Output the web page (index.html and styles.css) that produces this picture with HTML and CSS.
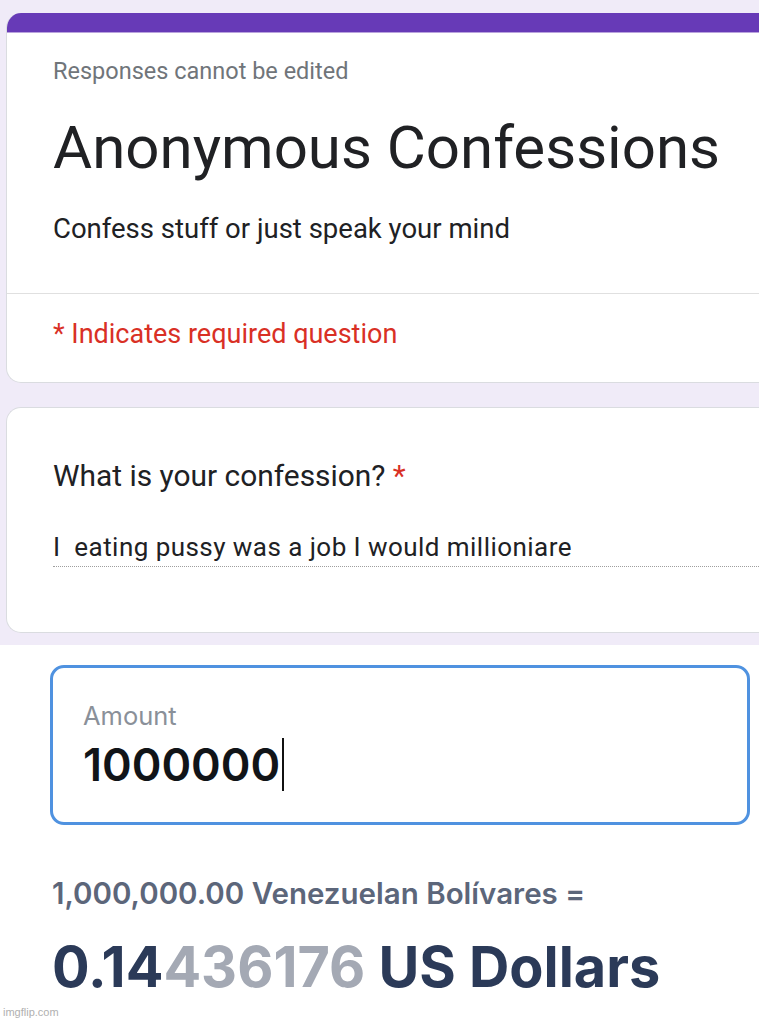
FILE: index.html
```html
<!DOCTYPE html>
<html lang="en">
<head>
  <meta charset="UTF-8">
  <title>Anonymous Confessions</title>
  <link rel="stylesheet" href="styles.css">
</head>
<body>

  <!-- 1) GOOGLE FORM PART -->
  <div class="form-area">
    <div class="card header-card">
      <div class="card-accent"></div>
      <div class="header-main">
        <div class="notice">Responses cannot be edited</div>
        <h1 class="form-title">Anonymous Confessions</h1>
        <div class="form-desc">Confess stuff or just speak your mind</div>
      </div>
      <div class="header-required">* Indicates required question</div>
    </div>

    <div class="card question-card">
      <div class="question">What is your confession? <span class="star">*</span></div>
      <div class="answer">I&nbsp; eating pussy was a job I would millioniare</div>
    </div>
  </div>

  <!-- 2) CURRENCY CONVERTER PART -->
  <div class="converter">
    <div class="amount-box">
      <div class="amount-label">Amount</div>
      <div class="amount-value">1000000<span class="caret"></span></div>
    </div>

    <div class="rate-from">1,000,000.00 Venezuelan Bolívares =</div>
    <div class="rate-to">0.14<span class="faded">436176</span> US Dollars</div>
  </div>

  <div class="watermark">imgflip.com</div>

</body>
</html>
```

FILE: styles.css
```css
/********************************************************
 * 1) PAGE
 ********************************************************/
html, body {
  margin: 0;
  padding: 0;
  background: #fff;
  overflow: hidden;
}

body {
  position: relative;
  height: 1020px;
}

/********************************************************
 * 2) FORM AREA (lavender) + CARDS
 ********************************************************/
.form-area {
  background: #f0ebf8;
  padding: 13px 0 12px 6px;
  overflow: hidden;
  font-family: Roboto, "Liberation Sans", sans-serif;
}

.card {
  background: #fff;
  border: 1px solid #dadce0;
  border-right: none;
  border-radius: 15px 0 0 15px;
  margin-right: -20px;
}

.header-card {
  height: 369px;
  border-top: none;
  overflow: hidden;
}

.card-accent {
  height: 19px;
  background: #673ab7;
  border-bottom: 1px solid #b9a3dd;
}

.header-main {
  padding: 23px 0 0 46px;
  height: 261px;
  border-bottom: 1px solid #e0e0e0;
  box-sizing: border-box;
}

.notice {
  font-size: 23.5px;
  line-height: 30px;
  color: #70757a;
}

.form-title {
  margin: 26px 0 0;
  font-size: 60px;
  font-weight: 400;
  line-height: 72px;
  color: #202124;
}

.form-desc {
  margin-top: 27px;
  font-size: 27.5px;
  line-height: 36px;
  color: #202124;
}

.header-required {
  padding: 22px 0 0 46px;
  font-size: 27px;
  line-height: 36px;
  color: #d93025;
}

.question-card {
  margin-top: 24px;
  height: 226px;
  padding: 48px 0 0 46px;
  box-sizing: border-box;
}

.question {
  font-size: 29.9px;
  line-height: 40px;
  color: #202124;
}

.star {
  color: #d93025;
}

.answer {
  margin-top: 34px;
  font-size: 26px;
  line-height: 34px;
  letter-spacing: 0.45px;
  color: #202124;
  padding-bottom: 2px;
  border-bottom: 1px dotted #9e9e9e;
}

/********************************************************
 * 3) CURRENCY CONVERTER
 ********************************************************/
.converter {
  padding: 20px 0 0 50px;
  font-family: Inter, "Liberation Sans", sans-serif;
}

.amount-box {
  width: 700px;
  height: 160px;
  box-sizing: border-box;
  border: 3px solid #4f92e0;
  border-radius: 14px;
  padding: 32px 0 0 30px;
}

.amount-label {
  font-size: 25.5px;
  line-height: 32px;
  color: #8a9099;
}

.amount-value {
  margin-top: 6px;
  font-size: 45px;
  font-weight: 600;
  line-height: 52px;
  color: #111418;
  display: flex;
  align-items: center;
}

.caret {
  display: inline-block;
  width: 1.5px;
  height: 53px;
  margin-left: 2px;
  background: #111;
}

.rate-from {
  margin: 49px 0 0 2px;
  font-size: 29.5px;
  font-weight: 600;
  line-height: 38px;
  color: #5c667a;
}

.rate-to {
  margin: 23px 0 0 2px;
  font-size: 55.8px;
  font-weight: 700;
  line-height: 64px;
  color: #2b3a58;
}

.faded {
  color: #a4a9b4;
}

.watermark {
  position: absolute;
  left: 3px;
  bottom: 2px;
  font-family: "Liberation Sans", sans-serif;
  font-size: 11px;
  color: #b0b0b0;
}
```
